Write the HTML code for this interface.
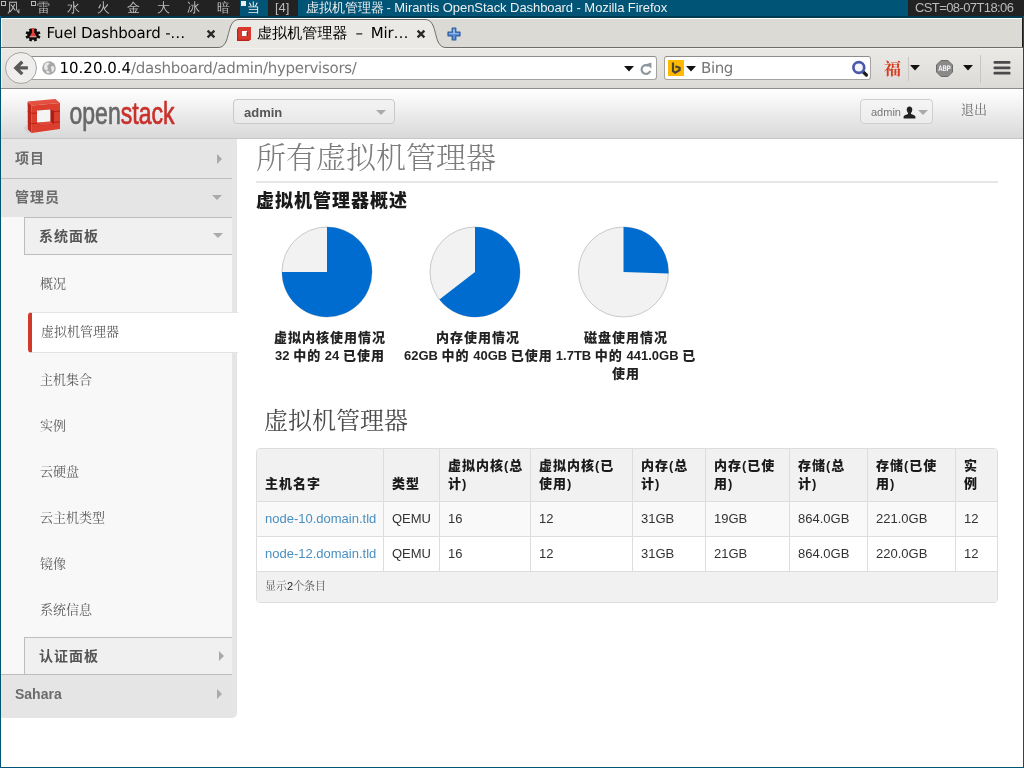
<!DOCTYPE html>
<html lang="zh-CN">
<head>
<meta charset="utf-8">
<title>虚拟机管理器 - Mirantis OpenStack Dashboard</title>
<style>
*{box-sizing:border-box;}
html,body{margin:0;padding:0;}
body{width:1024px;height:768px;overflow:hidden;position:relative;background:#fff;
  font-family:"Liberation Sans","Noto Serif CJK SC",sans-serif;font-size:13px;color:#333;}
.abs{position:absolute;}
.nw{white-space:nowrap;}

/* ---------- dwm bar ---------- */
#wm{position:absolute;left:0;top:0;width:1024px;height:16px;background:#222;color:#bbb;
  font-family:"WenQuanYi Zen Hei","Noto Sans CJK SC",sans-serif;font-size:13px;line-height:16px;overflow:hidden;}
#wm .tag{position:absolute;top:0;height:16px;width:30px;padding-left:7px;}
#wm .sel{background:#005577;color:#eee;}
#wm .sq{position:absolute;left:1px;top:1px;width:5px;height:5px;border:1px solid #bbb;}
#wm .sqf{position:absolute;left:1px;top:1px;width:5px;height:5px;background:#eee;}
#wmtitle{position:absolute;left:298px;top:0;width:610px;height:16px;background:#005577;color:#eee;padding-left:8px;white-space:nowrap;}
#wmtitle .lat{font-family:"Liberation Sans",sans-serif;font-size:13px;letter-spacing:-0.07px;margin-left:-1px;}
#wmclock{position:absolute;left:908px;top:0;width:116px;height:16px;background:#222;color:#bbb;padding-left:7px;white-space:nowrap;
  font-family:"Liberation Sans",sans-serif;font-size:13px;letter-spacing:-0.6px;}

/* ---------- window frame ---------- */
#frameTop{position:absolute;left:0;top:16px;width:1024px;height:2px;background:#023a52;}
#frameL{position:absolute;left:0;top:16px;width:1px;height:752px;background:#005577;z-index:50;}
#frameR{position:absolute;left:1023px;top:16px;width:1px;height:752px;background:#005577;z-index:50;}
#frameB{position:absolute;left:0;top:767px;width:1024px;height:1px;background:#005577;z-index:50;}

/* ---------- firefox chrome ---------- */
#tabs{position:absolute;left:1px;top:18px;width:1022px;height:30px;background:#dcdad5;
  font-family:"DejaVu Sans","WenQuanYi Zen Hei",sans-serif;font-size:15px;letter-spacing:-0.2px;color:#000;text-rendering:geometricPrecision;}
#navbar{position:absolute;left:1px;top:48px;width:1022px;height:41px;background:linear-gradient(#ebe9e6,#e6e4e0 40%,#dcdad6);border-bottom:1px solid #8f8d89;box-shadow:inset 1px 1px 0 #f4f3f0;
  font-family:"DejaVu Sans","WenQuanYi Zen Hei",sans-serif;font-size:15px;text-rendering:geometricPrecision;}
#urlbar{position:absolute;left:26px;top:8px;width:630px;height:24px;background:#fff;border:1px solid #a5a39f;border-top-color:#8f8d89;border-radius:0 3px 3px 0;}
#searchbar{position:absolute;left:663px;top:8px;width:207px;height:24px;background:#fff;border:1px solid #a5a39f;border-top-color:#8f8d89;border-radius:3px;}
#back{position:absolute;left:4px;top:4px;width:32px;height:32px;border-radius:16px;background:#efeeec;border:1px solid #a7a5a1;z-index:3;}
</style>
</head>
<body style="will-change:transform">

<!-- ======== dwm status bar ======== -->
<div id="wm">
  <div class="tag" style="left:0"><i class="sq"></i>风</div>
  <div class="tag" style="left:30px"><i class="sq"></i>雷</div>
  <div class="tag" style="left:60px">水</div>
  <div class="tag" style="left:90px">火</div>
  <div class="tag" style="left:120px">金</div>
  <div class="tag" style="left:150px">大</div>
  <div class="tag" style="left:180px">冰</div>
  <div class="tag" style="left:210px">暗</div>
  <div class="tag sel" style="left:240px;width:28px"><i class="sqf"></i>当</div>
  <div class="tag" style="left:268px;width:30px;padding-left:7px;font-family:'Liberation Sans',sans-serif">[4]</div>
  <div id="wmtitle">虚拟机管理器<span class="lat"> - Mirantis OpenStack Dashboard - Mozilla Firefox</span></div>
  <div id="wmclock">CST=08-07T18:06</div>
</div>
<div id="frameTop"></div><div id="frameL"></div><div id="frameR"></div><div id="frameB"></div>

<!-- ======== tab strip ======== -->
<div id="tabs">
  <svg class="abs" style="left:0;top:0" width="1022" height="30" viewBox="0 0 1022 30">
    <rect x="0" y="0" width="1022" height="1" fill="#fff"/>
    <rect x="0" y="0" width="1" height="30" fill="#fff"/>
    <rect x="1021" y="0" width="1" height="30" fill="#1c1c1c"/>
    <!-- active tab -->
    <path d="M217 29.5 C231 29.5 224 1.5 238 1.5 L424 1.5 C438 1.5 431 29.5 445 29.5 L445 30 L217 30 Z" fill="#ebe9e6"/>
    <path d="M0 29.5 L217 29.5 C231 29.5 224 1.5 238 1.5 L424 1.5 C438 1.5 431 29.5 445 29.5 L1022 29.5" fill="none" stroke="#6f6e6a" stroke-width="1"/>
  </svg>
  <!-- fuel favicon -->
  <svg class="abs" style="left:24px;top:10px" width="16" height="15" viewBox="0 0 16 15">
    <path d="M8.74 1.93 L9.54 0.26 L12.25 1.25 L11.47 2.92 L12.52 3.85 L14.42 3.16 L15.55 5.55 L13.65 6.25 L13.65 7.55 L15.55 8.25 L14.42 10.64 L12.52 9.95 L11.47 10.88 L12.25 12.55 L9.54 13.54 L8.74 11.87 L7.26 11.87 L6.46 13.54 L3.75 12.55 L4.53 10.88 L3.48 9.95 L1.58 10.64 L0.45 8.25 L2.35 7.55 L2.35 6.25 L0.45 5.55 L1.58 3.16 L3.48 3.85 L4.53 2.92 L3.75 1.25 L6.46 0.26 L7.26 1.93 Z" fill="#0d0d0d"/>
    <path d="M7 0 L9.2 0 L9.2 4.6 L11.5 8.7 L4.7 8.7 L7 4.6 Z" fill="#e63f3a"/>
    <path d="M4.9 8.2 L11.3 8.2 L11.6 9.3 L4.6 9.3 Z" fill="#f3b3ae"/>
  </svg>
  <div class="abs nw" style="left:45.5px;top:6px;line-height:19px">Fuel Dashboard -…</div>
  <svg class="abs" style="left:205px;top:11px" width="10" height="10" viewBox="0 0 10 10"><path d="M1.6 1.6 L8.4 8.4 M8.4 1.6 L1.6 8.4" stroke="#2a2a2a" stroke-width="2.3" fill="none"/></svg>
  <!-- openstack favicon -->
  <svg class="abs" style="left:235px;top:8px" width="16" height="16" viewBox="0 0 16 16">
    <path d="M1 3 L3 1 L15 1 L15 13 L13 15 L1 15 Z" fill="#b8211c"/>
    <rect x="2.2" y="1" width="12.8" height="12.6" fill="#d93a30"/>
    <rect x="6" y="5" width="5" height="5" fill="#fff"/>
    <rect x="10.6" y="6" width="1.2" height="4" fill="#a01a16"/>
  </svg>
  <div class="abs nw" style="left:256px;top:6px;line-height:19px"><span style="font-size:15px;letter-spacing:0.1px">虚拟机管理器</span> <span style="display:inline-block;width:14px;text-align:center">–</span> Mir…</div>
  <svg class="abs" style="left:415px;top:11px" width="10" height="10" viewBox="0 0 10 10"><path d="M1.6 1.6 L8.4 8.4 M8.4 1.6 L1.6 8.4" stroke="#2a2a2a" stroke-width="2.3" fill="none"/></svg>
  <!-- new tab plus -->
  <svg class="abs" style="left:446px;top:9px" width="14" height="14" viewBox="0 0 14 14">
    <path d="M5.2 1 L8.8 1 L8.8 5.2 L13 5.2 L13 8.8 L8.8 8.8 L8.8 13 L5.2 13 L5.2 8.8 L1 8.8 L1 5.2 L5.2 5.2 Z" fill="#5b8fd6" stroke="#2a5aa0" stroke-width="1.2" stroke-linejoin="round"/>
    <path d="M6.2 2.2 L7.8 2.2 L7.8 6.2 L11.8 6.2 L11.8 7 L2.2 7 L2.2 6.2 L6.2 6.2 Z" fill="#9cc0ee"/>
  </svg>
</div>

<!-- ======== nav toolbar ======== -->
<div id="navbar">
  <div id="urlbar">
    <!-- globe -->
    <svg class="abs" style="left:13px;top:3px" width="16" height="16" viewBox="0 0 16 16">
      <circle cx="8" cy="8" r="6.8" fill="#a8a8a8"/>
      <path d="M4.2 3.4 C5.6 2.2 7.6 2.2 8.6 3.2 C8.2 4.6 6.8 4.6 6.4 5.8 C6 7 7.2 7.6 6.8 9 C6.4 10.4 5 10.6 3.8 9.6 C2.6 8.4 2.8 4.8 4.2 3.4 Z M10.6 6.2 C12 5.6 13.4 6.6 13.4 8 C13.4 9.8 12.6 11.2 11.2 12.2 C10.4 11.8 10.8 10.6 10.4 9.6 C10 8.6 9.8 6.8 10.6 6.2 Z M5.6 10.8 C6.8 10.4 8.4 11 8.6 12.4 C8.4 13.4 7 13.6 6 13 C5.2 12.4 5 11.4 5.6 10.8 Z" fill="#e9e9e9"/>
    </svg>
    <div class="abs nw" style="left:31.5px;top:2px;line-height:19px;color:#7a7a7a;letter-spacing:-0.29px"><span style="color:#000;letter-spacing:0">10.20.0.4</span>/dashboard/admin/hypervisors/</div>
    <svg class="abs" style="left:596px;top:8.5px" width="10" height="6" viewBox="0 0 10 6"><path d="M0 0 L10 0 L5 5.5 Z" fill="#111"/></svg>
    <!-- reload -->
    <svg class="abs" style="left:611px;top:4.5px" width="14" height="14" viewBox="0 0 14 14">
      <path d="M9.6 3.9 A4.4 4.4 0 1 0 11.2 8.8" fill="none" stroke="#8f979e" stroke-width="2.2"/>
      <path d="M6.8 2.2 L12.4 0.6 L12.4 6.6 Z" fill="#8f979e"/>
    </svg>
  </div>
  <div id="back">
    <svg class="abs" style="left:6px;top:6px" width="18" height="18" viewBox="0 0 18 18"><path d="M10.3 2.7 L3.9 8.9 L10.3 15.1 M4.6 8.9 L15.9 8.9" fill="none" stroke="#595959" stroke-width="3.4" stroke-linejoin="miter"/></svg>
  </div>
  <div id="searchbar">
    <div class="abs" style="left:3px;top:3px;width:16px;height:16px;background:#ffb900"></div>
    <svg class="abs" style="left:3px;top:3px" width="16" height="16" viewBox="0 0 16 16"><path d="M5 2.6 L5 11.2 L7.2 12.6 L11.6 10 L11.6 7.8 L7.4 6.4" fill="none" stroke="#4d4632" stroke-width="2.2" stroke-linejoin="miter"/></svg>
    <svg class="abs" style="left:21px;top:8.5px" width="10" height="6" viewBox="0 0 10 6"><path d="M0 0 L10 0 L5 5.5 Z" fill="#111"/></svg>
    <div class="abs nw" style="left:36px;top:2px;line-height:19px;color:#777;letter-spacing:-0.4px">Bing</div>
    <!-- magnifier -->
    <svg class="abs" style="left:186px;top:2.5px" width="18" height="18" viewBox="0 0 18 18">
      <path d="M11.6 11.4 L15.4 15" stroke="#1e1e1e" stroke-width="3.3" stroke-linecap="round"/>
      <circle cx="7.8" cy="7.5" r="5.4" fill="#f4f6fb" stroke="#4a59a8" stroke-width="2.7"/>
    </svg>
  </div>
  <!-- 福 icon -->
  <div class="abs nw" style="left:883px;top:11px;width:18px;height:18px;line-height:18px;font-size:17px;color:#d93a1e;font-family:'Noto Serif CJK SC',serif;font-weight:700">福</div>
  <div class="abs" style="left:907px;top:9px;width:1px;height:24px;background:#c8c6c2"></div>
  <svg class="abs" style="left:909px;top:17px" width="10" height="6" viewBox="0 0 10 6"><path d="M0 0 L10 0 L5 5.5 Z" fill="#111"/></svg>
  <!-- ABP -->
  <svg class="abs" style="left:935px;top:12px" width="17" height="17" viewBox="0 0 17 17">
    <path d="M5 0.5 L12 0.5 L16.5 5 L16.5 12 L12 16.5 L5 16.5 L0.5 12 L0.5 5 Z" fill="#8a8a8a" stroke="#6a6a6a" stroke-width="1"/>
    <text x="8.5" y="11.4" font-family="Liberation Sans, sans-serif" font-size="8" font-weight="bold" fill="#fff" text-anchor="middle" textLength="12.6" lengthAdjust="spacingAndGlyphs">ABP</text>
  </svg>
  <svg class="abs" style="left:962px;top:17px" width="10" height="6" viewBox="0 0 10 6"><path d="M0 0 L10 0 L5 5.5 Z" fill="#111"/></svg>
  <div class="abs" style="left:979px;top:7px;width:1px;height:28px;background:#c8c6c2"></div>
  <!-- hamburger -->
  <svg class="abs" style="left:992px;top:12px" width="18" height="16" viewBox="0 0 18 16">
    <rect x="0.5" y="1" width="17" height="2.8" rx="1.2" fill="#4a4a4a"/>
    <rect x="0.5" y="6.4" width="17" height="2.8" rx="1.2" fill="#4a4a4a"/>
    <rect x="0.5" y="11.8" width="17" height="2.8" rx="1.2" fill="#4a4a4a"/>
  </svg>
</div>


<style>
/* ---------- page ---------- */
#page{position:absolute;left:1px;top:89px;width:1022px;height:678px;background:#fff;overflow:hidden;}
#hdr{position:absolute;left:0;top:0;width:1022px;height:50px;background:linear-gradient(#ffffff 0%,#fbfbfb 12%,#ececec 50%,#d9d9d9 100%);border-bottom:1px solid #c6c6c6;}
.cjk{font-family:"Liberation Sans","Noto Serif CJK SC",serif;}
.sel1{position:absolute;left:232px;top:10px;width:162px;height:25px;border:1px solid #c9c9c9;border-radius:4px;background:linear-gradient(#f3f3f3,#e9e9e9);}
.sel1 b{position:absolute;left:10px;top:5px;font-size:13px;line-height:16px;color:#555;}
.tri-d{position:absolute;width:0;height:0;border-left:5px solid transparent;border-right:5px solid transparent;border-top:5px solid #aaa;}
.tri-r{position:absolute;width:0;height:0;border-top:5px solid transparent;border-bottom:5px solid transparent;border-left:5px solid #aaa;}
.userbtn{position:absolute;left:859px;top:10px;width:73px;height:25px;border:1px solid #cfcfcf;border-radius:4px;background:linear-gradient(#f5f5f5,#ececec);}
/* sidebar */
#side{position:absolute;left:0;top:50px;width:236px;height:579px;background:#e5e5e5;border-radius:0 0 5px 0;}
#side .sub{position:absolute;left:0;top:78px;width:231px;height:458px;background:#f8f8f8;}
#side .h{position:absolute;left:14px;font-family:"Liberation Sans","Noto Sans CJK SC",sans-serif;font-weight:bold;font-size:14px;line-height:20px;color:#6b6b6b;letter-spacing:1px;white-space:nowrap;}
#side .ln{position:absolute;left:0;width:231px;height:1px;background:#bdbdbd;}
#side .pg{position:absolute;left:23px;width:208px;height:38px;background:#f0f0f0;border:1px solid #bdbdbd;border-right:0;}
#side .pg span{position:absolute;left:14px;top:8px;font-family:"Liberation Sans","Noto Sans CJK SC",sans-serif;font-weight:bold;font-size:14px;line-height:20px;color:#555;letter-spacing:1px;white-space:nowrap;}
#side .it{position:absolute;left:39px;font-size:13px;line-height:18px;color:#5a5a5a;white-space:nowrap;}
#side .act{position:absolute;left:27px;top:173px;width:210px;height:41px;background:#fff;border-left:4px solid #d1392b;border-top:1px solid #e4e4e4;border-bottom:1px solid #e4e4e4;border-radius:4px 0 0 4px;}
</style>
<div id="page" class="cjk">
  <div id="hdr">
    <!-- logo -->
    <svg class="abs" style="left:21px;top:7px" width="42" height="40" viewBox="22 96 42 40">
      <path d="M23.5 128 L27.9 124 L31.6 133.4 L27 132.5 Z" fill="#cfcfcf" opacity="0.7"/>
      <path d="M27.6 101.4 L31.6 105.5 L31.6 133 L27.9 129.5 Z" fill="#bf271c"/>
      <path d="M27.6 101.4 L55.4 98.9 L60 103 L31.6 105.5 Z" fill="#e4503f"/>
      <path d="M31.6 105.5 L60 103 L60 128.9 L31.6 133 Z" fill="#dc3f2e"/>
      <path d="M37 110.6 L50.4 109.6 L54 111 L54 124.2 L40.4 125.4 L37 122.6 Z" fill="#a81e17"/>
      <path d="M37 122.6 L50.4 121.6 L54 124.2 L40.4 125.4 Z" fill="#e0493a"/>
      <path d="M37 110.6 L50.4 109.6 L50.4 121.6 L37 122.6 Z" fill="#f4f4f4"/>
      <path d="M27.8 111.6 L31.6 113.4 L37 113 M27.8 121.4 L31.6 123.6 L37 123.2 M54 111.6 L60 111.1 M54 122.4 L60 121.8" stroke="#b52317" stroke-width="1" fill="none"/>
    </svg>
    <svg class="abs" style="left:66px;top:8px" width="114" height="38" viewBox="0 0 114 38">
      <text x="2.5" y="27" font-family="Liberation Sans, sans-serif" font-size="31" textLength="105" lengthAdjust="spacingAndGlyphs" stroke-width="0.7" stroke-linejoin="round"><tspan fill="#686868" stroke="#686868">open</tspan><tspan fill="#c9302c" stroke="#c9302c">stack</tspan></text>
    </svg>
    <div class="sel1"><b>admin</b><i class="tri-d" style="left:142px;top:10px"></i></div>
    <div class="userbtn">
      <span class="abs" style="left:10px;top:5px;font-size:11px;line-height:14px;color:#777">admin</span>
      <svg class="abs" style="left:42px;top:6px" width="13" height="13" viewBox="0 0 13 13"><path d="M6.5 0.4 C8.4 0.4 9.3 1.8 9.3 3.6 C9.3 5.2 8.7 6.4 8 7 L8 8 C9.5 8.6 12.2 9.4 12.4 10.6 L12.4 12.4 L0.6 12.4 L0.6 10.6 C0.8 9.4 3.5 8.6 5 8 L5 7 C4.3 6.4 3.7 5.2 3.7 3.6 C3.7 1.8 4.6 0.4 6.5 0.4 Z" fill="#222"/></svg>
      <i class="tri-d" style="left:57px;top:10px"></i>
    </div>
    <div class="abs nw" style="left:960px;top:12px;font-size:13px;line-height:18px;color:#6a6a6a">退出</div>
  </div>

  <!-- ===== sidebar ===== -->
  <div id="side">
    <div class="h" style="top:9px">项目</div><i class="tri-r" style="left:216px;top:15px"></i>
    <div class="ln" style="top:39px"></div>
    <div class="h" style="top:48px">管理员</div><i class="tri-d" style="left:211px;top:56px"></i>
    <div class="sub"></div>
    <div class="pg" style="top:78px"><span>系统面板</span><i class="tri-d" style="left:188px;top:15px"></i></div>
    <div class="it" style="top:136px">概况</div>
    <div class="act"></div>
    <div class="it" style="top:184px;left:40px">虚拟机管理器</div>
    <div class="it" style="top:232px">主机集合</div>
    <div class="it" style="top:278px">实例</div>
    <div class="it" style="top:324px">云硬盘</div>
    <div class="it" style="top:370px">云主机类型</div>
    <div class="it" style="top:416px">镜像</div>
    <div class="it" style="top:462px">系统信息</div>
    <div class="pg" style="top:498px"><span>认证面板</span><i class="tri-r" style="left:194px;top:13px"></i></div>
    <div class="ln" style="top:535px"></div>
    <div class="h" style="top:545px;letter-spacing:0">Sahara</div><i class="tri-r" style="left:216px;top:550px"></i>
  </div>


<style>
#main h2.t{position:absolute;left:255px;top:48.5px;margin:0;font-weight:300;font-size:30px;line-height:40px;color:#7d7d7d;white-space:nowrap;font-family:"Liberation Sans","Noto Serif CJK SC",serif;}
#main .hr{position:absolute;left:255px;top:92px;width:742px;height:2px;background:#e6e6e6;}
#main h3.s{position:absolute;left:255px;top:99px;margin:0;font-family:"Liberation Sans","Noto Sans CJK SC",sans-serif;font-weight:900;font-size:18px;line-height:26px;color:#1a1a1a;letter-spacing:1px;white-space:nowrap;}
.plab{position:absolute;top:240px;width:148px;text-align:center;white-space:nowrap;font-family:"Liberation Sans","Noto Sans CJK SC",sans-serif;font-weight:900;font-size:13px;line-height:18px;color:#222;letter-spacing:1px;}
.plab .n{letter-spacing:0;}
#main h3.th{position:absolute;left:263px;top:314px;margin:0;font-weight:normal;font-size:24px;line-height:36px;color:#4a4a4a;white-space:nowrap;}
#tbl{position:absolute;left:255px;top:359px;width:742px;height:155px;border:1px solid #ddd;border-radius:4px;background:#fff;overflow:hidden;}
#tbl .hd{position:absolute;left:0;top:0;width:740px;height:53px;background:#f1f1f1;border-bottom:1px solid #ddd;}
#tbl .r1{position:absolute;left:0;top:53px;width:740px;height:35px;background:#f9f9f9;border-bottom:1px solid #ddd;}
#tbl .r2{position:absolute;left:0;top:88px;width:740px;height:35px;background:#fff;border-bottom:1px solid #ddd;}
#tbl .ft{position:absolute;left:0;top:123px;width:740px;height:30px;background:#f1f1f1;}
#tbl .v{position:absolute;top:0;width:1px;height:123px;background:#ddd;}
#tbl .c{position:absolute;font-size:13px;line-height:18px;color:#333;white-space:nowrap;}
#tbl .hc{position:absolute;font-size:13px;line-height:18px;color:#1a1a1a;font-family:"Liberation Sans","Noto Sans CJK SC",sans-serif;font-weight:900;letter-spacing:1px;}
#tbl a{color:#4a8fc0;text-decoration:none;}
</style>
<div id="main">
  <h2 class="t">所有虚拟机管理器</h2>
  <div class="hr"></div>
  <h3 class="s">虚拟机管理器概述</h3>
  <svg class="abs" style="left:0;top:0" width="1022" height="260" viewBox="0 0 1022 260"><circle cx="326" cy="183" r="45" fill="#f2f2f2" stroke="#c9c9c9" stroke-width="1"/><path d="M326 183 L326 138 A45 45 0 1 1 281.00 183.00 Z" fill="#006ccf"/><circle cx="474" cy="183" r="45" fill="#f2f2f2" stroke="#c9c9c9" stroke-width="1"/><path d="M474 183 L474 138 A45 45 0 1 1 438.42 210.54 Z" fill="#006ccf"/><circle cx="622.5" cy="183" r="45" fill="#f2f2f2" stroke="#c9c9c9" stroke-width="1"/><path d="M622.5 183 L622.5 138 A45 45 0 0 1 667.48 184.47 Z" fill="#006ccf"/></svg>
  <div class="plab" style="left:255px">虚拟内核使用情况<br><span class="n">32 </span>中的<span class="n"> 24 </span>已使用</div>
  <div class="plab" style="left:403px">内存使用情况<br><span class="n">62GB </span>中的<span class="n"> 40GB </span>已使用</div>
  <div class="plab" style="left:551px">磁盘使用情况<br><span class="n">1.7TB </span>中的<span class="n"> 441.0GB </span>已<br>使用</div>
  <h3 class="th">虚拟机管理器</h3>
  <div id="tbl">
    <div class="hd"></div><div class="r1"></div><div class="r2"></div><div class="ft"></div>
    <i class="v" style="left:126px"></i><i class="v" style="left:182px"></i><i class="v" style="left:273px"></i><i class="v" style="left:375px"></i>
    <i class="v" style="left:448px"></i><i class="v" style="left:532px"></i><i class="v" style="left:610px"></i><i class="v" style="left:698px"></i>
    <div class="hc" style="left:8px;top:26px">主机名字</div>
    <div class="hc" style="left:135px;top:26px">类型</div>
    <div class="hc" style="left:191px;top:8px">虚拟内核(总<br>计)</div>
    <div class="hc" style="left:282px;top:8px">虚拟内核(已<br>使用)</div>
    <div class="hc" style="left:384px;top:8px">内存(总<br>计)</div>
    <div class="hc" style="left:457px;top:8px">内存(已使<br>用)</div>
    <div class="hc" style="left:541px;top:8px">存储(总<br>计)</div>
    <div class="hc" style="left:619px;top:8px">存储(已使<br>用)</div>
    <div class="hc" style="left:707px;top:8px">实<br>例</div>

    <div class="c" style="left:8px;top:61px"><a>node-10.domain.tld</a></div>
    <div class="c" style="left:135px;top:61px">QEMU</div>
    <div class="c" style="left:191px;top:61px">16</div>
    <div class="c" style="left:282px;top:61px">12</div>
    <div class="c" style="left:384px;top:61px">31GB</div>
    <div class="c" style="left:457px;top:61px">19GB</div>
    <div class="c" style="left:541px;top:61px">864.0GB</div>
    <div class="c" style="left:619px;top:61px">221.0GB</div>
    <div class="c" style="left:707px;top:61px">12</div>

    <div class="c" style="left:8px;top:96px"><a>node-12.domain.tld</a></div>
    <div class="c" style="left:135px;top:96px">QEMU</div>
    <div class="c" style="left:191px;top:96px">16</div>
    <div class="c" style="left:282px;top:96px">12</div>
    <div class="c" style="left:384px;top:96px">31GB</div>
    <div class="c" style="left:457px;top:96px">21GB</div>
    <div class="c" style="left:541px;top:96px">864.0GB</div>
    <div class="c" style="left:619px;top:96px">220.0GB</div>
    <div class="c" style="left:707px;top:96px">12</div>

    <div class="c" style="left:8px;top:130px;font-size:11px;line-height:14px;color:#555">显示<span style="color:#222">2</span>个条目</div>
  </div>
</div>

</div>


</body>
</html>
